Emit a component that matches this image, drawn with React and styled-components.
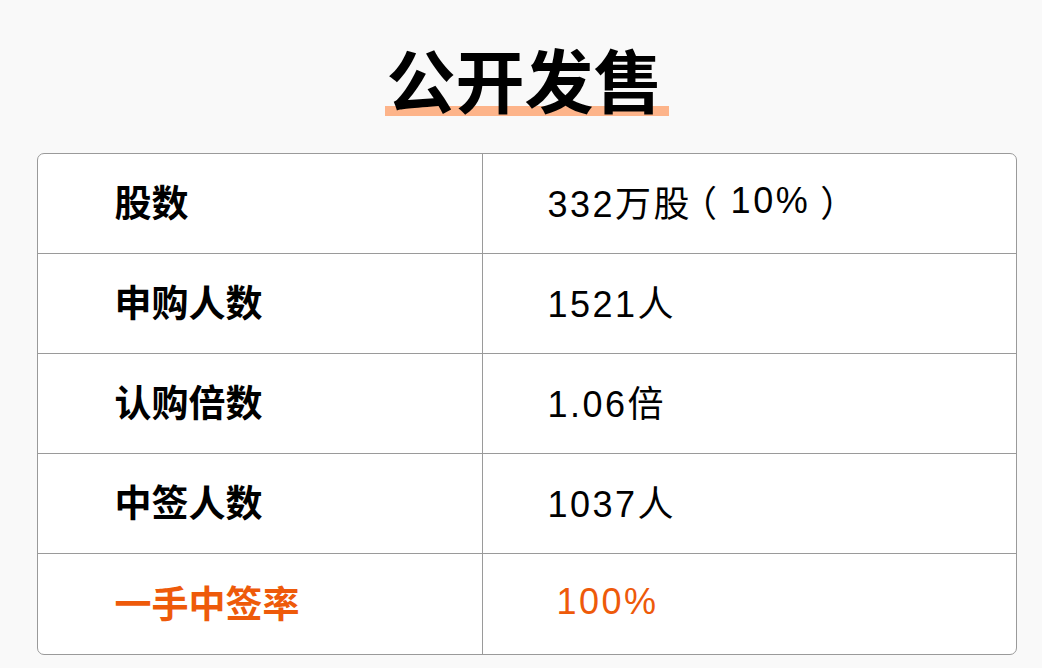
import React from "react";
import styled, { createGlobalStyle } from "styled-components";

const GlobalStyle = createGlobalStyle`
  html, body {
    margin: 0;
    padding: 0;
    background: #f9f9f9;
  }
  body {
    font-family: "Liberation Sans", Arial, "Noto Sans CJK SC", sans-serif;
  }
`;

const Page = styled.div`
  width: 1042px;
  height: 668px;
  box-sizing: border-box;
  padding: 41px 26px 0 37px;
  display: flex;
  flex-direction: column;
  align-items: center;
`;

const TitleWrap = styled.div`
  height: 112px;
  display: flex;
  align-items: flex-start;
  justify-content: center;
`;

const Title = styled.h1`
  margin: 0;
  padding: 0 6px 0 2px;
  font-family: "Noto Sans CJK SC", sans-serif;
  font-size: 69px;
  font-weight: 700;
  line-height: 75px;
  color: #000;
  background: linear-gradient(transparent 86.5%, #fdb48a 86.5%);
`;

const Table = styled.div`
  width: 980px;
  box-sizing: border-box;
  border: 1px solid #9a9a9a;
  border-radius: 7px;
  background: #fff;
  display: grid;
  grid-template-columns: 445px 1fr;
  overflow: hidden;
`;

const Cell = styled.div`
  height: 100px;
  box-sizing: border-box;
  display: flex;
  align-items: center;
  padding-bottom: 5px;
  color: ${(p) => (p.$accent ? "#ee5a0a" : "#000")};
  border-bottom: ${(p) => (p.$last ? "none" : "1px solid #9a9a9a")};
`;

const Label = styled(Cell)`
  padding-left: 77px;
  font-family: "Noto Sans CJK SC", sans-serif;
  font-size: 37px;
  font-weight: 700;
  border-right: 1px solid #9a9a9a;
`;

const Value = styled(Cell)`
  padding-left: ${(p) => 65 + (p.$indent || 0)}px;
  font-family: "Liberation Sans", Arial, "Noto Sans CJK SC", sans-serif;
  font-size: 36px;
  letter-spacing: 2.5px;
`;

const Tight = styled.span`
  letter-spacing: -8.5px;
`;

const Paren = styled.span`
  letter-spacing: ${(p) => (p.$close ? "-7.5px" : "13.5px")};
  margin-left: ${(p) => (p.$close ? "10px" : "0")};
`;

const rows = [
  {
    label: "股数",
    value: (
      <>
        332万<Tight>股</Tight>
        <Paren>（</Paren>10%<Paren $close>）</Paren>
      </>
    ),
  },
  { label: "申购人数", value: "1521人" },
  { label: "认购倍数", value: "1.06倍" },
  { label: "中签人数", value: "1037人" },
  { label: "一手中签率", value: "100%", accent: true, indent: 9 },
];

export default function App() {
  return (
    <>
      <GlobalStyle />
      <Page>
        <TitleWrap>
          <Title>公开发售</Title>
        </TitleWrap>
        <Table>
          {rows.map((r, i) => {
            const last = i === rows.length - 1;
            return (
              <React.Fragment key={r.label}>
                <Label $accent={r.accent} $last={last}>
                  {r.label}
                </Label>
                <Value $accent={r.accent} $last={last} $indent={r.indent}>
                  {r.value}
                </Value>
              </React.Fragment>
            );
          })}
        </Table>
      </Page>
    </>
  );
}
